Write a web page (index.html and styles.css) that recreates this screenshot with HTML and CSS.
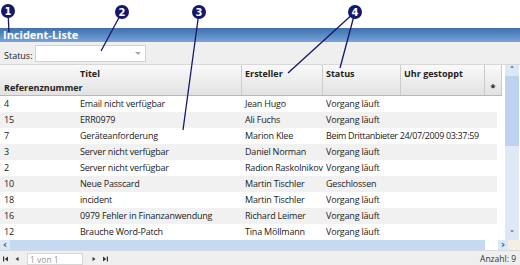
FILE: index.html
```html
<!DOCTYPE html>
<html lang="de">
<head>
  <meta charset="UTF-8" />
  <title>Incident-Liste</title>
  <link rel="stylesheet" href="styles.css">
</head>
<body>

  <div class="page">
    <div class="top-space"></div>

    <div class="titlebar">Incident-Liste</div>

    <div class="toolbar">
      <label>Status:</label>
      <div class="combo"><span class="combo-arrow"></span></div>
    </div>

    <div class="grid">
      <div class="grid-main">
        <div class="head">
          <div class="hcell c-ref bottom">Referenznummer</div>
          <div class="hcell c-title">Titel</div>
          <div class="hcell c-user">Ersteller</div>
          <div class="hcell c-status">Status</div>
          <div class="hcell c-clock">Uhr gestoppt</div>
          <div class="hcell c-star bottom">*</div>
        </div>

        <div class="row">
          <div class="c-ref">4</div><div class="c-title">Email nicht verfügbar</div><div class="c-user">Jean Hugo</div><div class="c-status">Vorgang läuft</div>
        </div>
        <div class="row alt">
          <div class="c-ref">15</div><div class="c-title">ERR0979</div><div class="c-user">Ali Fuchs</div><div class="c-status">Vorgang läuft</div>
        </div>
        <div class="row">
          <div class="c-ref">7</div><div class="c-title">Geräteanforderung</div><div class="c-user">Marion Klee</div><div class="c-status wide">Beim Drittanbieter 24/07/2009 03:37:59</div>
        </div>
        <div class="row alt">
          <div class="c-ref">3</div><div class="c-title">Server nicht verfügbar</div><div class="c-user">Daniel Norman</div><div class="c-status">Vorgang läuft</div>
        </div>
        <div class="row">
          <div class="c-ref">2</div><div class="c-title">Server nicht verfügbar</div><div class="c-user">Radion Raskolnikov</div><div class="c-status">Vorgang läuft</div>
        </div>
        <div class="row alt">
          <div class="c-ref">10</div><div class="c-title">Neue Passcard</div><div class="c-user">Martin Tischler</div><div class="c-status">Geschlossen</div>
        </div>
        <div class="row">
          <div class="c-ref">18</div><div class="c-title">incident</div><div class="c-user">Martin Tischler</div><div class="c-status">Vorgang läuft</div>
        </div>
        <div class="row alt">
          <div class="c-ref">16</div><div class="c-title">0979 Fehler in Finanzanwendung</div><div class="c-user">Richard Leimer</div><div class="c-status">Vorgang läuft</div>
        </div>
        <div class="row">
          <div class="c-ref">12</div><div class="c-title">Brauche Word-Patch</div><div class="c-user">Tina Möllmann</div><div class="c-status">Vorgang läuft</div>
        </div>
      </div>

      <div class="vscroll">
        <div class="sbtn">&#708;</div>
        <div class="vthumb"></div>
        <div class="vtrack"></div>
        <div class="sbtn">&#709;</div>
      </div>
    </div>

    <div class="hscroll">
      <div class="sbtn">&lsaquo;</div>
      <div class="hthumb"></div>
      <div class="hgap"></div>
      <div class="sbtn">&rsaquo;</div>
      <div class="corner"></div>
    </div>

    <div class="pager">
      <svg class="pico" width="8" height="8" viewBox="0 0 8 8"><rect x="1" y="1.5" width="1.2" height="5" fill="#333"/><path d="M6 1.5 L2.8 4 L6 6.5 Z" fill="#333"/></svg>
      <svg class="pico" width="8" height="8" viewBox="0 0 8 8"><path d="M5.5 2 L2.5 4 L5.5 6 Z" fill="#333"/></svg>
      <div class="page-box">1 von 1</div>
      <svg class="pico" width="8" height="8" viewBox="0 0 8 8"><path d="M2.5 2 L5.5 4 L2.5 6 Z" fill="#333"/></svg>
      <svg class="pico" width="8" height="8" viewBox="0 0 8 8"><path d="M2 1.5 L5.2 4 L2 6.5 Z" fill="#333"/><rect x="5.8" y="1.5" width="1.2" height="5" fill="#333"/></svg>
      <span class="count">Anzahl: 9</span>
    </div>

    <!-- callouts lie over the panel -->
    <svg class="callouts" width="520" height="265" viewBox="0 0 520 265">
      <g stroke="#14176a" stroke-width="1.3" fill="none">
        <line x1="8" y1="12" x2="9" y2="32"/>
        <line x1="122" y1="12" x2="101" y2="51"/>
        <line x1="199" y1="12" x2="183" y2="130"/>
        <line x1="355" y1="12" x2="288" y2="73"/>
        <line x1="355" y1="12" x2="340" y2="68"/>
      </g>
      <g fill="#14176a">
        <circle cx="8" cy="11" r="7"/>
        <circle cx="122" cy="12" r="7"/>
        <circle cx="199" cy="12" r="7"/>
        <circle cx="355" cy="12" r="7"/>
      </g>
      <g fill="#fff" font-family="'DejaVu Sans', sans-serif" font-weight="bold" font-size="10" text-anchor="middle">
        <text x="8" y="14.5">1</text>
        <text x="122" y="15.5">2</text>
        <text x="199" y="15.5">3</text>
        <text x="355" y="15.5">4</text>
      </g>
    </svg>
  </div>

</body>
</html>
```

FILE: styles.css
```css
body {
  margin: 0;
  font-family: 'Open Sans', sans-serif;
  font-size: 9px;
  color: #222;
  background: white;
}

.page {
  position: relative;
  width: 520px;
  height: 265px;
  overflow: hidden;
  display: flex;
  flex-direction: column;
}

.top-space {
  height: 28px;
  flex: none;
}

.titlebar {
  height: 14px;
  flex: none;
  background: linear-gradient(#3f70ad, #5d8cc6 55%, #7ba4d6);
  color: white;
  font-weight: bold;
  font-size: 11px;
  line-height: 14px;
  padding-left: 3px;
}

.toolbar {
  height: 22px;
  flex: none;
  background: #efefef;
  display: flex;
  align-items: center;
  padding-left: 4px;
  gap: 2px;
}

.toolbar label {
  padding-top: 4px;
}

.combo {
  position: relative;
  width: 111px;
  height: 17px;
  background: white;
  border: 1px solid #d2d2d2;
  box-sizing: border-box;
}

.combo-arrow {
  position: absolute;
  right: 4px;
  top: 6px;
  border-left: 3px solid transparent;
  border-right: 3px solid transparent;
  border-top: 3px solid #a8a8a8;
}

.grid {
  display: flex;
  flex: none;
  height: 175px;
  border-top: 1px solid #d8d8d8;
}

.grid-main {
  width: 502px;
}

.head {
  display: flex;
  height: 30px;
  background: linear-gradient(#fafafa, #e2e2e2);
  border-bottom: 1px solid #b9b9b9;
  font-weight: bold;
}

.hcell {
  display: flex;
  align-items: flex-start;
  padding-top: 2px;
  border-right: 1px solid #cbcbcb;
  box-sizing: border-box;
}

.hcell.bottom {
  align-items: flex-end;
  padding-bottom: 1px;
}

.hcell.c-ref {
  border-right: none;
  white-space: nowrap;
  overflow: visible;
}

.c-ref { width: 77px; padding-left: 4px; box-sizing: border-box; }
.c-title { width: 165px; padding-left: 3px; box-sizing: border-box; }
.c-user { width: 81px; padding-left: 3px; box-sizing: border-box; white-space: nowrap; }
.c-status { width: 78px; padding-left: 3px; box-sizing: border-box; white-space: nowrap; }
.c-clock { width: 84px; padding-left: 3px; box-sizing: border-box; }
.c-star { width: 17px; justify-content: center; }

.row {
  display: flex;
  height: 16px;
  line-height: 16px;
  width: 497px;
  letter-spacing: -0.2px;
}

.row .wide {
  letter-spacing: -0.35px;
}

.row.alt {
  background: #f1f1f1;
}

.vscroll {
  width: 14px;
  margin-left: 3px;
  display: flex;
  flex-direction: column;
}

.sbtn {
  height: 11px;
  width: 12px;
  flex: none;
  font-size: 9px;
  line-height: 11px;
  text-align: center;
  color: #3a5a8c;
  font-weight: bold;
  font-family: 'DejaVu Sans', sans-serif;
  background: #dce8f6;
}

.vscroll .sbtn {
  width: 14px;
}

.vthumb {
  height: 70px;
  background: #bcd2ee;
}

.vtrack {
  flex: 1;
  background: #dfe9f6;
}

.hscroll {
  display: flex;
  height: 10px;
  flex: none;
  background: white;
}

.hscroll .sbtn {
  height: 10px;
  line-height: 9px;
  width: 10px;
  font-size: 11px;
}

.hthumb {
  width: 475px;
  background: #c6d9f2;
}

.hgap {
  width: 13px;
}

.corner {
  flex: 1;
  background: #f3efe2;
}

.pager {
  height: 16px;
  flex: none;
  background: #efefef;
  border-top: 1px solid #dadada;
  box-sizing: border-box;
  display: flex;
  align-items: center;
  padding-left: 2px;
  gap: 3px;
}

.pico {
  flex: none;
}

.page-box {
  width: 56px;
  height: 12px;
  margin: 0 4px 0 3px;
  background: white;
  border: 1px solid #d6d6d6;
  box-sizing: border-box;
  color: #999;
  font-size: 8.5px;
  line-height: 11px;
  padding-left: 2px;
}

.count {
  margin-left: auto;
  padding-right: 4px;
  font-size: 8.5px;
  color: #333;
}

.callouts {
  position: absolute;
  left: 0;
  top: 0;
  pointer-events: none;
}
```
